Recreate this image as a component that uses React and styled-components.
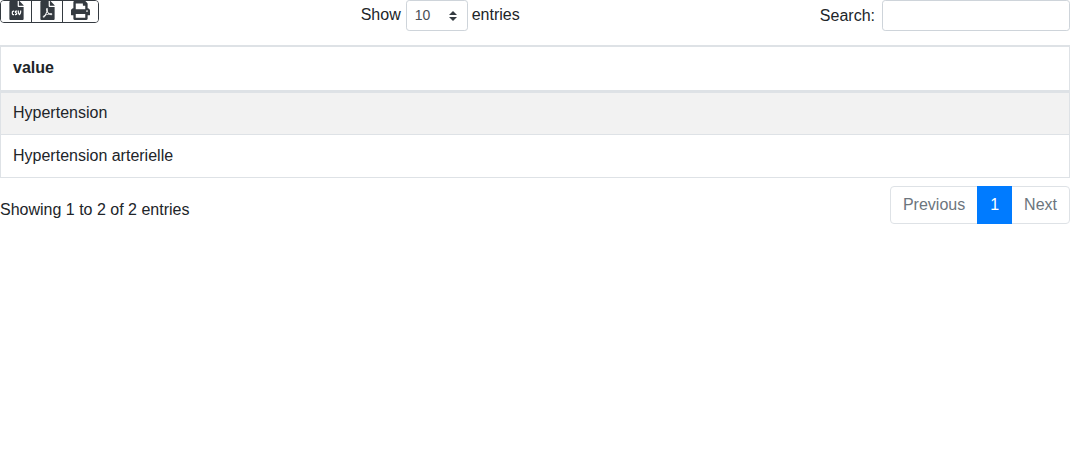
import * as React from "react"
import styled, { createGlobalStyle } from "styled-components"
import { FaFileCsv, FaFilePdf, FaPrint } from "react-icons/fa"

const GlobalStyle = createGlobalStyle`
  html, body {
    margin: 0;
    padding: 0;
    background: #fff;
    color: #212529;
    font-family: "Liberation Sans", Arial, sans-serif;
    font-size: 16px;
    line-height: 1.5;
  }
`

const Toolbar = styled.div`
  display: grid;
  grid-template-columns: 1fr 1fr 1fr;
  align-items: start;
  height: 45px;
`

const ButtonGroup = styled.div`
  display: inline-flex;
  justify-self: start;
  height: 23px;
  border: 1px solid #343a40;
  border-radius: 4px;
  overflow: hidden;
  box-sizing: border-box;
`

const IconButton = styled.button`
  display: flex;
  align-items: flex-start;
  justify-content: center;
  width: ${(props) => props.$width}px;
  padding: 0;
  border: 0;
  border-left: ${(props) => (props.$first ? "0" : "1px solid #343a40")};
  background: #fff;
  color: #343a40;
  font-size: 19px;
  overflow: hidden;
  svg {
    display: block;
  }
`

const LengthControl = styled.label`
  display: flex;
  align-items: center;
  height: 31px;
  padding-left: 4px;
  font-size: 16px;
  line-height: 29px;
`

const LabelText = styled.span`
  display: block;
  height: 29px;
  align-self: flex-start;
`

const Select = styled.div`
  display: flex;
  align-items: center;
  justify-content: space-between;
  box-sizing: border-box;
  width: 62px;
  height: 31px;
  margin: 0 4px 0 5px;
  padding: 0 10px 0 8px;
  border: 1px solid #ced4da;
  border-radius: 3.2px;
  background: #fff;
  color: #495057;
  font-size: 14px;
`

const SearchControl = styled.label`
  display: flex;
  align-items: center;
  justify-content: flex-end;
  height: 31px;
`

const SearchInput = styled.input`
  box-sizing: border-box;
  width: 188px;
  height: 31px;
  margin-left: 7px;
  padding: 4px 8px;
  border: 1px solid #ced4da;
  border-radius: 3.2px;
  background: #fff;
`

const Table = styled.table`
  width: 100%;
  border-collapse: collapse;
  box-sizing: border-box;
`

const HeadCell = styled.th`
  height: 45px;
  padding: 0 12px;
  box-sizing: border-box;
  border: 1px solid #dee2e6;
  border-bottom: 3px solid #dee2e6;
  border-top: 2px solid #dee2e6;
  text-align: left;
  font-weight: 700;
`

const Row = styled.tr`
  background: ${(props) => (props.$striped ? "#f2f2f2" : "#fff")};
`

const Cell = styled.td`
  height: 43px;
  padding: 0 12px;
  box-sizing: border-box;
  border: 1px solid #dee2e6;
`

const Footer = styled.div`
  display: flex;
  justify-content: space-between;
  align-items: flex-start;
  margin-top: 8px;
`

const Info = styled.div`
  padding-top: 12px;
`

const Pagination = styled.ul`
  display: flex;
  margin: 0;
  padding: 0;
  list-style: none;
`

const PageLink = styled.li`
  box-sizing: border-box;
  height: 38px;
  padding: 6px 12px;
  margin-left: ${(props) => (props.$first ? "0" : "-1px")};
  border: 1px solid ${(props) => (props.$active ? "#007bff" : "#dee2e6")};
  border-radius: ${(props) =>
    props.$first ? "4px 0 0 4px" : props.$last ? "0 4px 4px 0" : "0"};
  background: ${(props) => (props.$active ? "#007bff" : "#fff")};
  color: ${(props) => (props.$active ? "#fff" : "#6c757d")};
  position: ${(props) => (props.$active ? "relative" : "static")};
`

const SelectArrows = () => (
  <svg width="8" height="10" viewBox="0 0 8 10">
    <path d="M4 0 L8 4 H0 Z M0 6 H8 L4 10 Z" fill="#343a40" />
  </svg>
)

export default function App() {
  return (
    <>
      <GlobalStyle />
      <Toolbar>
        <ButtonGroup>
          <IconButton $first $width={30}>
            <FaFileCsv />
          </IconButton>
          <IconButton $width={31}>
            <FaFilePdf />
          </IconButton>
          <IconButton $width={36}>
            <FaPrint />
          </IconButton>
        </ButtonGroup>
        <LengthControl>
          <LabelText>Show</LabelText>
          <Select>
            10
            <SelectArrows />
          </Select>
          <LabelText>entries</LabelText>
        </LengthControl>
        <SearchControl>
          Search:
          <SearchInput />
        </SearchControl>
      </Toolbar>
      <Table>
        <thead>
          <tr>
            <HeadCell>value</HeadCell>
          </tr>
        </thead>
        <tbody>
          <Row $striped>
            <Cell>Hypertension</Cell>
          </Row>
          <Row>
            <Cell>Hypertension arterielle</Cell>
          </Row>
        </tbody>
      </Table>
      <Footer>
        <Info>Showing 1 to 2 of 2 entries</Info>
        <Pagination>
          <PageLink $first>Previous</PageLink>
          <PageLink $active>1</PageLink>
          <PageLink $last>Next</PageLink>
        </Pagination>
      </Footer>
    </>
  )
}
